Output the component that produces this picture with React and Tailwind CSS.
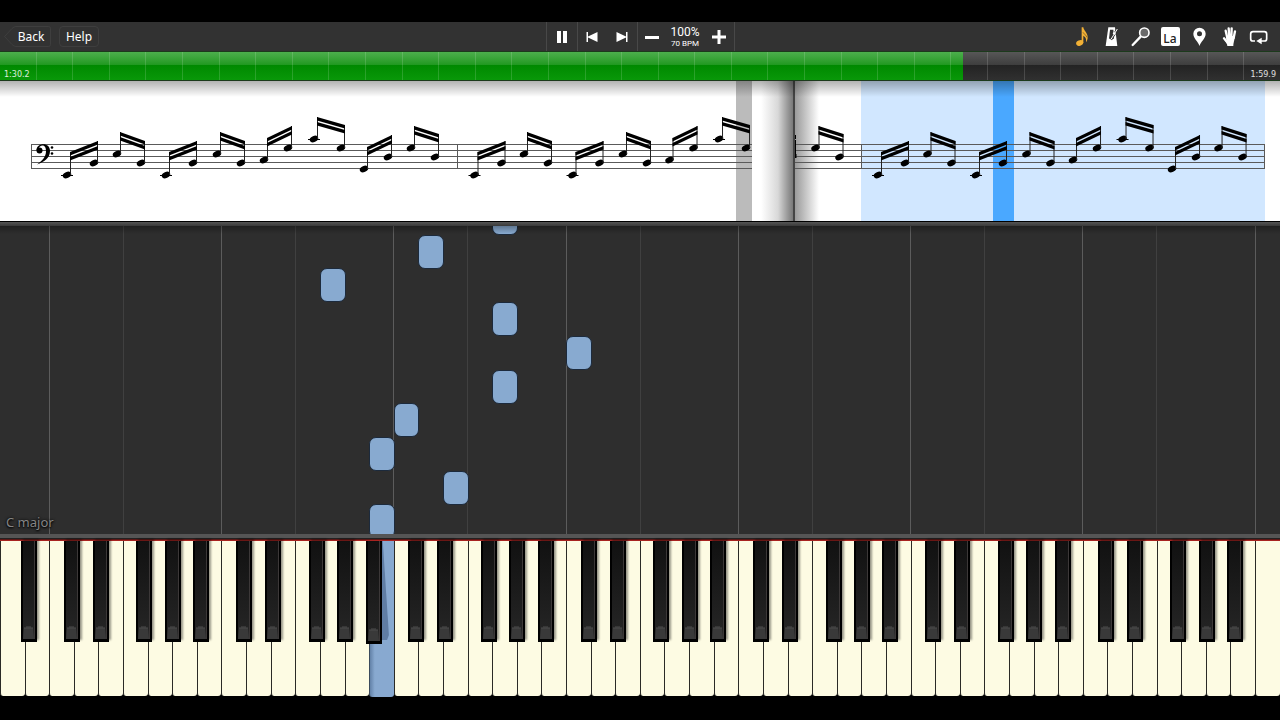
import { useState } from 'react'

const WHITE_KEYS = 52
const KEY_NAMES = ['A', 'B', 'C', 'D', 'E', 'F', 'G']

// sharps, in white-key widths from the C of their octave
const SHARPS = [
  { name: 'C#', at: 0.59 },
  { name: 'D#', at: 1.77 },
  { name: 'F#', at: 3.54 },
  { name: 'G#', at: 4.69 },
  { name: 'A#', at: 5.85 },
]

const whiteKeys = Array.from({ length: WHITE_KEYS }, (_, i) => i)

const blackKeys = [{ id: 'A#0', at: 0.85 }]
for (let octave = 0; octave < 7; octave++) {
  SHARPS.forEach(s => blackKeys.push({ id: `${s.name}${octave + 1}`, at: 2 + octave * 7 + s.at }))
}

const fallingNotes = [
  { key: 20, top: -25 },
  { key: 17, top: 9 },
  { key: 13, top: 42 },
  { key: 20, top: 76 },
  { key: 23, top: 110 },
  { key: 20, top: 144 },
  { key: 16, top: 177 },
  { key: 15, top: 211 },
  { key: 18, top: 245 },
  { key: 15, top: 278 },
]

// one measure of beamed pairs: x from the first head, head heights, beam heights
const PAIRS = [
  { x: 0, w: 27, y1: 94, y2: 82, b1: 71, b2: 60 },
  { x: 50, w: 24, y1: 73, y2: 82, b1: 51, b2: 60 },
  { x: 99, w: 27, y1: 94, y2: 82, b1: 71, b2: 60 },
  { x: 150, w: 24, y1: 73, y2: 82, b1: 51, b2: 60 },
  { x: 197, w: 24, y1: 79, y2: 67, b1: 57, b2: 45 },
  { x: 247, w: 27, y1: 58, y2: 67, b1: 36, b2: 44 },
  { x: 297, w: 24, y1: 88, y2: 76, b1: 66, b2: 54 },
  { x: 344, w: 24, y1: 67, y2: 76, b1: 45, b2: 53 },
]

const percent = keys => `${(keys / WHITE_KEYS) * 100}%`

function Head({ x, y }) {
  return (
    <>
      <ellipse cx={x} cy={y} rx="4.4" ry="3" transform={`rotate(-22 ${x} ${y})`} />
      {(y === 94 || y === 58) && <path d={`M${x - 6} ${y + 0.5}h12`} stroke="#000" />}
    </>
  )
}

function Pair({ x, w, y1, y2, b1, b2 }) {
  const s1 = x + 3.5
  const s2 = x + w + 3.5
  return (
    <g>
      <Head x={x} y={y1} />
      <Head x={x + w} y={y2} />
      <path d={`M${s1} ${y1}V${b1}M${s2} ${y2}V${b2}`} stroke="#222" />
      {[0, 5].map(d => (
        <path key={d} d={`M${s1 - 0.5} ${b1 + d}L${s2 + 0.5} ${b2 + d}v3.500L${s1 - 0.5} ${b1 + d + 3.5}z`} />
      ))}
    </g>
  )
}

function Measure({ x, scale = 1, count = 8 }) {
  return PAIRS.slice(0, count).map(p => <Pair key={p.x} {...p} x={x + p.x * scale} />)
}

function Staff({ from, to }) {
  return [63.5, 69.5, 75.5, 81.5, 87.5].map(y => (
    <path key={y} d={`M${from} ${y}H${to}`} stroke="#5a5a5a" />
  ))
}

function LeftPage() {
  return (
    <div className="relative flex-[795] overflow-hidden bg-white">
      <svg viewBox="0 0 795 140" className="block h-[140px] w-full" role="img" aria-label="Current page">
        <rect x="736" y="0" width="16" height="140" fill="#bbb" />
        <Staff from={31} to={752} />
        <path d="M31.5 63V88M457.5 63V88" stroke="#5a5a5a" />
        <circle cx="39.500" cy="69.500" r="3" />
        <path d="M36.500 69C36.500 62 50 60.500 50 70C50 77 44 81 37 83.500C42.500 79.500 46 76 46 70C46 62 39 63.500 38 69z" />
        <circle cx="52" cy="66.500" r="1.300" />
        <circle cx="52" cy="72.500" r="1.300" />
        <Measure x={67} />
        <Measure x={474.5} scale={0.99} count={6} />
      </svg>
      <div className="absolute inset-y-0 right-0 w-[34px] bg-linear-to-r from-white via-[#d8d8d8] to-[#6c6c6c]" />
      <div className="absolute inset-y-0 right-0 w-[2px] bg-[#444]" />
    </div>
  )
}

function RightPage() {
  return (
    <div className="relative flex-[485] overflow-hidden bg-white">
      <div className="absolute inset-y-0 left-0 w-[24px] bg-linear-to-r from-[#9a9a9a] to-white" />
      <svg viewBox="0 0 485 140" className="relative block h-[140px] w-full" role="img" aria-label="Next page">
        <rect x="66" y="0" width="404" height="140" fill="#d1e7ff" />
        <rect x="198" y="0" width="21" height="140" fill="#4aa8ff" />
        <Staff from={0} to={470} />
        <path d="M66.500 63V88M469.500 63V88" stroke="#5a5a5a" />
        <path d="M0 54h1v4h-1zM0 59h1v17h-1zM0 73h1.500v4h-1.500z" />
        <Pair {...PAIRS[7]} x={20.5} />
        <Measure x={83} scale={0.99} />
      </svg>
    </div>
  )
}

function IconButton({ label, children, className = 'w-[30px]' }) {
  return (
    <button type="button" aria-label={label} className={`flex h-[29px] items-center justify-center ${className}`}>
      {children}
    </button>
  )
}

// toolbar drawings share an 87 unit grid, three units to a pixel
function Glyph({ children }) {
  return (
    <svg viewBox="0 0 87 87" className="h-[29px] w-[29px]" fill="#fff">
      {children}
    </svg>
  )
}

function Toolbar() {
  const [playing, setPlaying] = useState(true)

  return (
    <header className="grid h-[29px] grid-cols-[1fr_auto_1fr] bg-[#323232] text-white">
      <div className="flex items-center gap-2 pl-1">
        <button type="button" className="relative h-[21px] w-[47px] pl-[7px] text-[12px] leading-[20px]">
          <svg viewBox="0 0 47 21" className="absolute inset-0 h-full w-full" fill="none" stroke="#3e3e3e">
            <path d="M.5 10.500L8 2.500Q10 .5 12 .5H44.500Q46.500 .5 46.500 2.500V18.500Q46.500 20.500 44.500 20.500H12Q10 20.500 8 18.500z" />
          </svg>
          Back
        </button>
        <button type="button" className="h-[21px] w-[40px] rounded-sm border border-[#3e3e3e] text-[12px] leading-[18px]">
          Help
        </button>
      </div>

      <div className="flex border-x border-[#484848]">
        <button
          type="button"
          aria-label={playing ? 'Pause' : 'Play'}
          onClick={() => setPlaying(!playing)}
          className="flex w-[31px] items-center justify-center border-r border-[#484848]"
        >
          <svg viewBox="0 0 12 14" className="h-[14px] w-3" fill="#fff">
            {playing ? <path d="M1 1h4v12h-4zM7 1h4v12h-4z" /> : <path d="M1 1l10 6-10 6z" />}
          </svg>
        </button>
        <div className="flex w-[60px] border-r border-[#484848]">
          <IconButton label="Previous bar">
            <svg viewBox="0 0 12 10" className="h-[10px] w-3" fill="#fff">
              <path d="M.5 0h1.500v4.500L11.500 0v10L2 5.500V10H.5z" />
            </svg>
          </IconButton>
          <IconButton label="Next bar">
            <svg viewBox="0 0 12 10" className="h-[10px] w-3" fill="#fff">
              <path d="M11.500 0H10v4.500L.5 0v10L10 5.500V10h1.500z" />
            </svg>
          </IconButton>
        </div>
        <IconButton label="Slower" className="w-[29px]">
          <svg viewBox="0 0 14 14" className="h-[14px] w-[14px]" fill="#fff">
            <path d="M0 6h14v3H0z" />
          </svg>
        </IconButton>
        <div className="flex w-[37px] flex-col items-center justify-center whitespace-nowrap font-['Roboto']">
          <span className="text-[12px] leading-[14px]">100%</span>
          <span className="text-[8px] leading-[9px]">70 BPM</span>
        </div>
        <IconButton label="Faster">
          <svg viewBox="0 0 14 14" className="h-[14px] w-[14px]" fill="#fff">
            <path d="M5.500 0h3v5.500H14v3H8.500V14h-3V8.500H0v-3h5.500z" />
          </svg>
        </IconButton>
      </div>

      <div className="flex justify-end pr-[7px]">
        <div className="flex w-[206px] justify-between">
          <IconButton label="Sheet music" className="w-[29px]">
            <Glyph>
              <g fill="#f2b035">
                <ellipse cx="38" cy="63" rx="11" ry="8" transform="rotate(-25 38 63)" />
                <path d="M44 16h5c1 10 13 17 13 29 0 8-2 11-5 16 1-10 0-15-8-20v22h-5z" />
                <path d="M48 31c4 6 10 9 12 15" fill="none" stroke="#5b4925" strokeWidth="2" />
              </g>
            </Glyph>
          </IconButton>
          <IconButton label="Metronome" className="w-[29px]">
            <Glyph>
              <path d="M34 16H54L61 72H26z" />
              <path d="M39 23H49L51 50H36z" fill="#323232" />
              <path d="M62 20L42 53" stroke="#323232" strokeWidth="7" />
              <path d="M61 21L42 52" stroke="#fff" strokeWidth="3" />
              <path d="M50 29L57 33L53 39L47 35z" />
            </Glyph>
          </IconButton>
          <IconButton label="Zoom" className="w-[29px]">
            <Glyph>
              <path d="M44 44L20 69" stroke="#fff" strokeWidth="7" strokeLinecap="round" />
              <circle cx="55" cy="32" r="14" fill="#6a6a6a" stroke="#fff" strokeWidth="5" />
            </Glyph>
          </IconButton>
          <IconButton label="Note names" className="w-[29px]">
            <span className="h-[19px] w-[19px] rounded-[2px] bg-white pt-[2px] text-center text-[12px] font-medium leading-[19px] text-[#222]">
              La
            </span>
          </IconButton>
          <IconButton label="Bookmark" className="w-[29px]">
            <Glyph>
              <path
                fillRule="evenodd"
                d="M43.500 72C39 59 25 49 25 35.500a18.500 18.500 0 0 1 37 0C62 49 48 59 43.500 72zM43.500 28a7.500 7.500 0 1 0 0 15 7.500 7.500 0 0 0 0-15z"
              />
            </Glyph>
          </IconButton>
          <IconButton label="Hands" className="w-[29px]">
            <Glyph>
              <path d="M33 42L59 42C59 56 55 61 55 72H37C37 65 33 60 28 53L34 54z" />
              <path
                d="M37 48L32 26M43 46L41 19M49 46L50 19M56 48L60 28M38 62L27 49"
                fill="none"
                stroke="#fff"
                strokeWidth="7"
                strokeLinecap="round"
              />
            </Glyph>
          </IconButton>
          <IconButton label="Loop" className="w-[29px]">
            <Glyph>
              <path
                d="M33 57H27Q20 57 20 50V36Q20 29 27 29H61Q68 29 68 36V50Q68 57 61 57H50"
                fill="none"
                stroke="#fff"
                strokeWidth="5"
              />
              <path d="M37 57L53 47V67z" />
            </Glyph>
          </IconButton>
        </div>
      </div>
    </header>
  )
}

function Progress() {
  return (
    <div
      role="progressbar"
      aria-label="Song position"
      aria-valuenow={75}
      className="relative h-[30px] border-y border-[#1c3a1c] bg-linear-to-b from-[#575757] to-[#3c3c3c] to-50%"
    >
      <div className="absolute inset-x-0 bottom-0 h-[15px] bg-linear-to-b from-[#232323] to-[#303030]" />
      <div className="absolute inset-y-0 left-0 w-[75.2%] bg-linear-to-b from-[#4caf4c] to-[#1a971a] to-50%">
        <div className="absolute inset-x-0 bottom-0 h-[15px] bg-linear-to-b from-[#008900] to-[#099809]" />
      </div>
      <div className="absolute inset-0 flex">
        {Array.from({ length: 35 }, (_, i) => (
          <div key={i} className="flex-1 border-r border-white/15 last:border-r-0" />
        ))}
      </div>
      <div className="absolute inset-x-0 bottom-0 flex justify-between px-1 font-['DejaVu_Sans'] text-[8px] leading-[10px] text-white/85">
        <span>1:30.2</span>
        <span>1:59.9</span>
      </div>
    </div>
  )
}

function Roll() {
  return (
    <div className="relative min-h-[308px] flex-1 overflow-hidden bg-[#2e2e2e]">
      <div className="absolute inset-0 flex">
        {whiteKeys.map(i => (
          <div
            key={i}
            className={`flex-1 ${i % 7 === 2 ? 'border-l border-[#5c5c5c]' : i % 7 === 5 ? 'border-l border-[#404040]' : ''}`}
          />
        ))}
      </div>
      {fallingNotes.map(n => (
        <div
          key={n.top}
          className="absolute h-[34px] rounded-[7px] border border-[#1c2a3c] bg-[#88aad0]"
          style={{ top: n.top, left: percent(n.key), width: percent(1.04) }}
        />
      ))}
      <div className="absolute inset-x-0 top-0 h-2 bg-linear-to-b from-black/30 to-transparent" />
      <p className="absolute bottom-[3px] left-[6px] text-[13px] leading-[18px] text-[#858585] [text-shadow:0_0_3px_#000,0_1px_2px_#000]">
        C major
      </p>
    </div>
  )
}

function Keyboard() {
  const pressed = 15

  return (
    <div className="relative h-[155px] bg-black">
      <div className="flex h-full">
        {whiteKeys.map(i => (
          <button
            key={i}
            type="button"
            aria-label={`${KEY_NAMES[i % 7]}${Math.floor((i + 5) / 7)}`}
            className={`flex-1 rounded-b-[3px] border-l ${
              i === pressed
                ? 'h-[156px] border-[#3b4a5c] bg-linear-to-r from-[#6382a8] from-0% via-[#88a9d0] via-20% to-[#88a9d0]'
                : 'h-full border-[#2a2a26] bg-[#fdfbe3]'
            }`}
          />
        ))}
      </div>
      <div
        className="absolute top-0 h-[99px] bg-[#5f7da4] [clip-path:polygon(0_0,50%_0,100%_95%,85%_100%,0_100%)]"
        style={{ left: percent(15.3), width: percent(0.5) }}
      />
      {blackKeys.map(k => (
        <button
          key={k.id}
          type="button"
          aria-label={k.id}
          className={`absolute top-0 w-[16px] border-x-2 border-b-[3px] border-black bg-linear-to-b from-[#111] to-[#262626] ${
            k.id === 'A#2' ? 'h-[103px]' : 'h-[101px] shadow-[2px_-2px_2px_rgba(0,0,0,0.4)]'
          }`}
          style={{ left: percent(k.at) }}
        >
          <span className="flex h-full items-end border-r border-[#3c3838]">
            <svg viewBox="0 0 11 13" className="h-[13px] w-[11px]">
              <path d="M0 13L1 2H10L11 13z" fill="#393939" />
              <path d="M1 2H10M3 1H8" stroke="#4c4c4c" />
            </svg>
          </span>
        </button>
      ))}
    </div>
  )
}

export default function App() {
  return (
    <div className="flex min-h-screen flex-col bg-black pb-6 pt-[22px] font-['Noto_Sans',sans-serif]">
      <Toolbar />
      <Progress />
      <div className="relative flex h-[140px]">
        <LeftPage />
        <RightPage />
        <div className="absolute inset-x-0 top-0 h-4 bg-linear-to-b from-black/30 to-transparent" />
      </div>
      <div className="h-[5px] border-t border-black bg-linear-to-b from-[#555] to-[#3a3a3a]" />
      <Roll />
      <div className="h-[5px] border-b border-[#222] bg-[#555]" />
      <div className="h-[2px] border-b border-[#a82320] bg-[#5c1614]" />
      <Keyboard />
    </div>
  )
}
